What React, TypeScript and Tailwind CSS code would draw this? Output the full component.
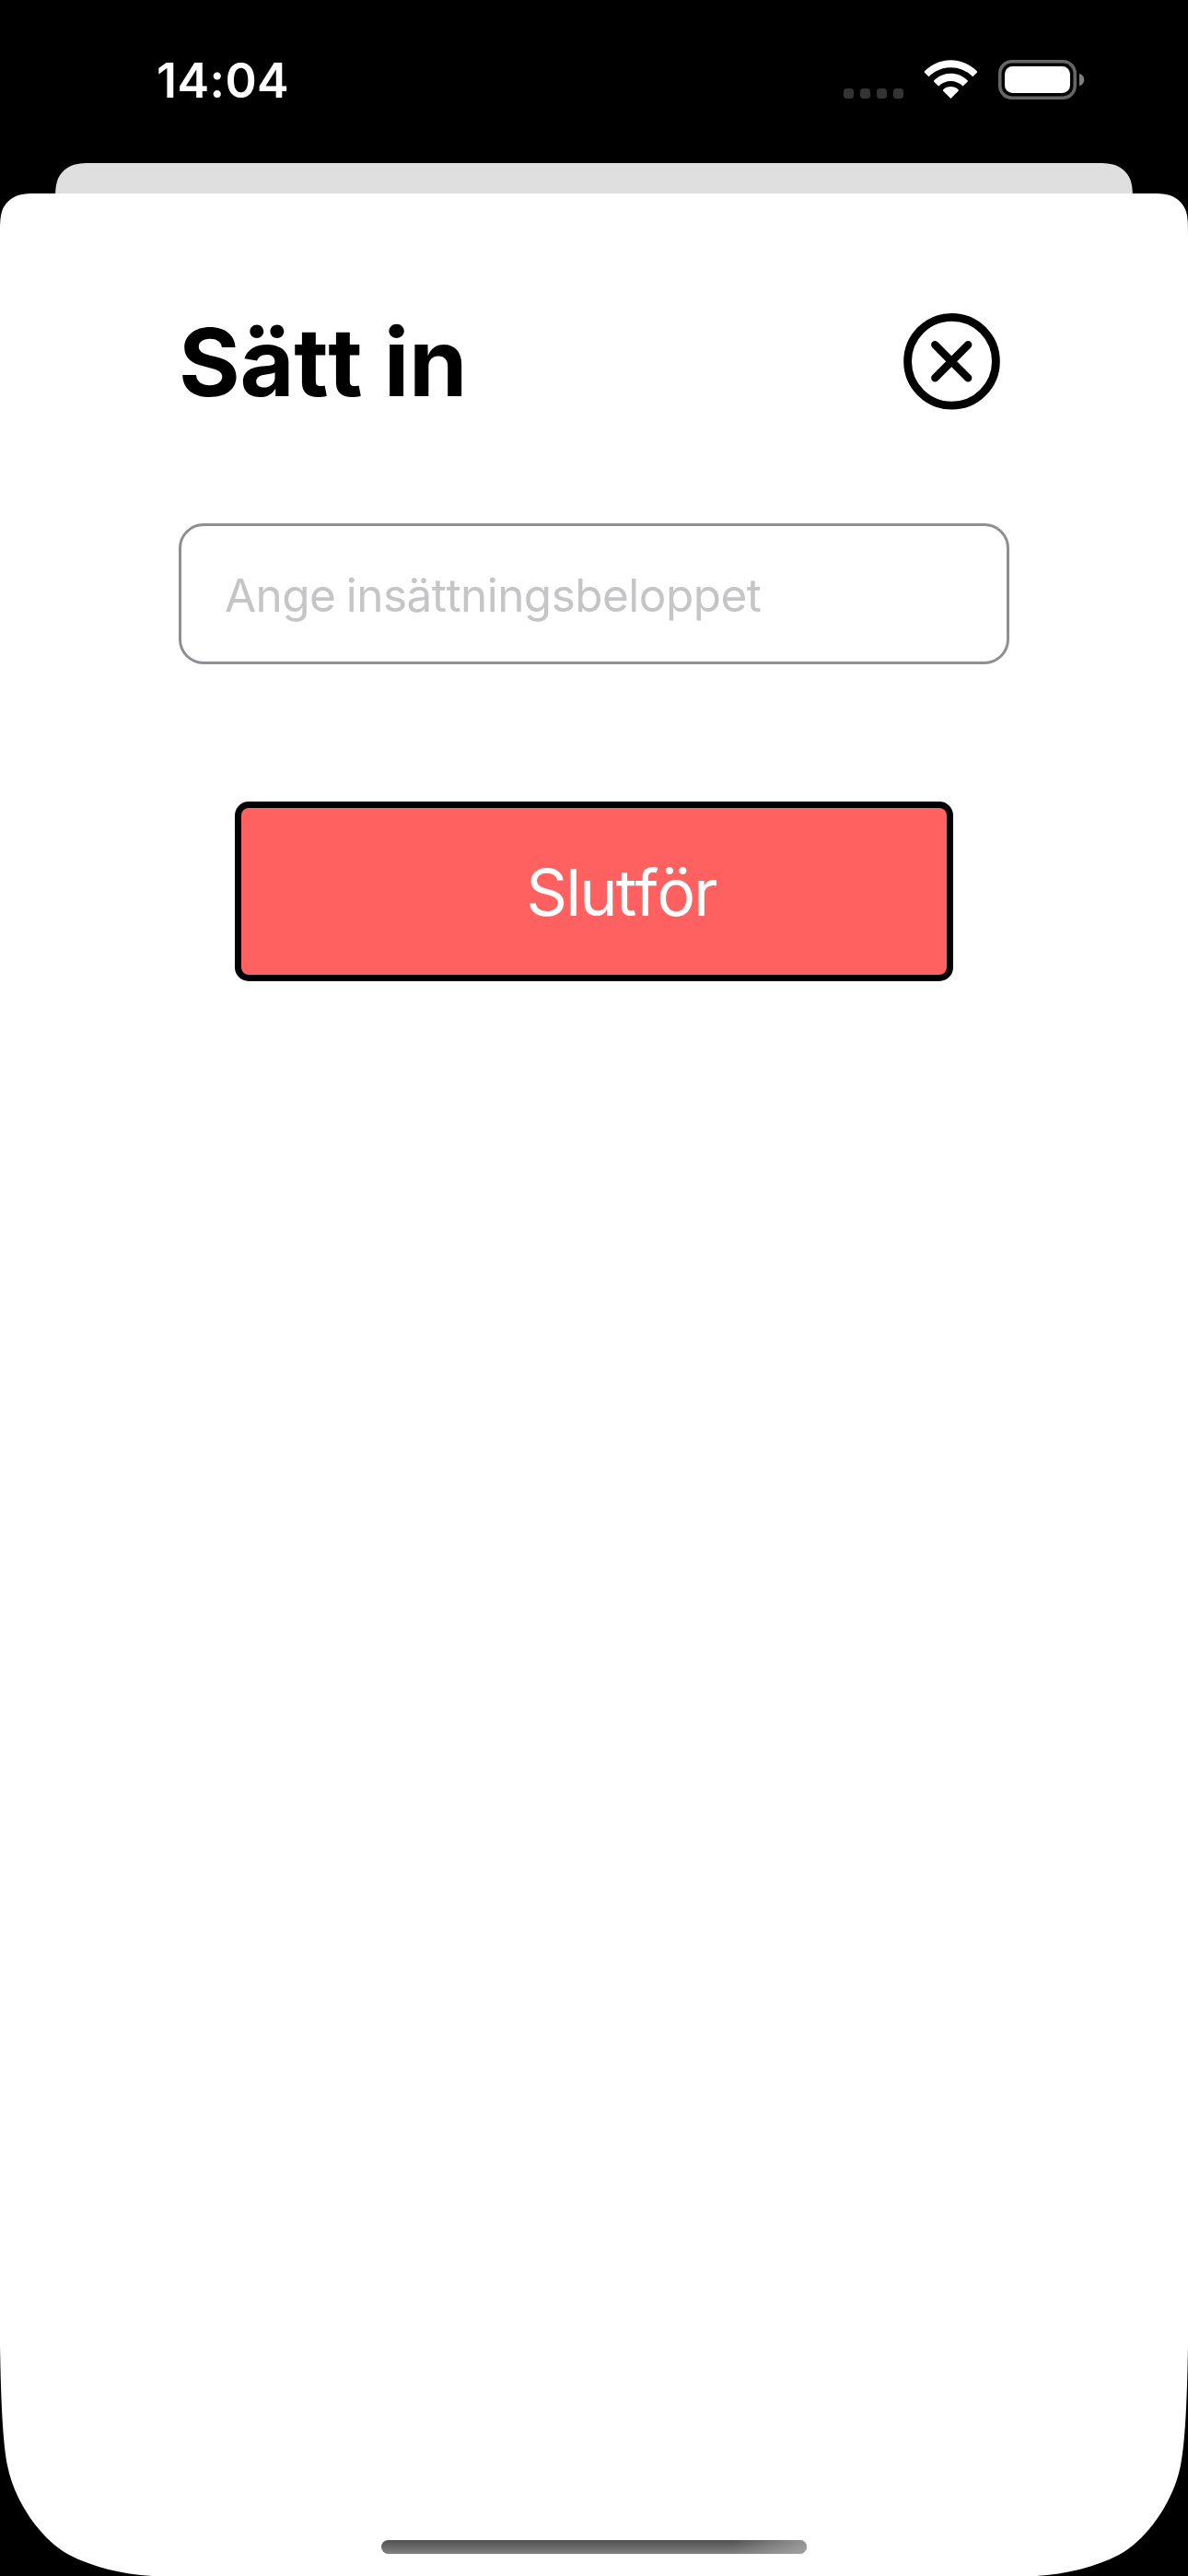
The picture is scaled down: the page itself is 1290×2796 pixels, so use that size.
import React from "react";

// Continuous (squircle-like) corner filled outside of the curve, anchored top-left.
function cornerPath(r: number) {
  const p = (n: number) => (n * r).toFixed(2);
  return [
    `M0 0H${p(1.528665)}`,
    `C${p(1.08849296)} 0 ${p(0.86840694)} 0 ${p(0.63149379)} ${p(0.07491139)}`,
    `C${p(0.37282383)} ${p(0.16905956)} ${p(0.16905956)} ${p(0.37282383)} ${p(0.07491139)} ${p(0.63149379)}`,
    `C0 ${p(0.86840694)} 0 ${p(1.08849296)} 0 ${p(1.528665)}Z`,
  ].join("");
}

function Corner({ r, className }: { r: number; className: string }) {
  const size = Math.ceil(r * 1.53);
  return (
    <svg width={size} height={size} viewBox={`0 0 ${size} ${size}`} className={`absolute text-black ${className}`} aria-hidden>
      <path d={cornerPath(r)} fill="currentColor" />
    </svg>
  );
}

// Large bottom corner of the device display, anchored bottom-left.
function DisplayCorner({ className }: { className: string }) {
  return (
    <svg width="170" height="250" viewBox="0 0 170 250" className={`absolute bottom-0 ${className}`} aria-hidden>
      <path
        d="M0 250H165C132 248 100 240 75 227C61 219.500 48 207 38 194C25 177 13 155 8 130C3 104 1 60 0 0Z"
        fill="black"
      />
    </svg>
  );
}

function StatusBar() {
  return (
    <header className="flex h-[177px] items-start justify-between pl-[170px] pr-[112px] text-white">
      <span className="mt-[56px] text-[52px] leading-[64px] font-semibold tracking-[0.4px]">14:04</span>
      <div className="mt-[65px] flex h-[43px] items-start">
        <div className="mt-[31px] flex gap-[7px]">
          {[0, 1, 2, 3].map((i) => (
            <span key={i} className="size-[11px] rounded-[3.5px] bg-[#333333]" />
          ))}
        </div>
        <svg width="58" height="43" viewBox="0 0 58 43" className="ml-[22px]" aria-hidden>
          <g fill="white">
            <path d="M1.2 12C17-3.8 41.8-3.8 57.6 12Q58.6 13 57.6 14L53.4 18.2C39.8 4.9 19 4.9 5.4 18.2L1.2 14Q.2 13 1.2 12Z" />
            <path d="M11.3 22.2C21.2 12.3 37.6 12.3 47.5 22.2Q48.3 23 47.5 23.8L42.6 28.6C35 21.2 23.8 21.2 16.2 28.6L11.3 23.8Q10.5 23 11.3 22.2Z" />
            <path d="M21.2 32.2C25.6 27.9 33.2 27.9 37.6 32.2Q38.4 33 37.6 33.8L29.4 42L21.2 33.8Q20.4 33 21.2 32.2Z" />
          </g>
        </svg>
        <svg width="94" height="43" viewBox="0 0 94 43" className="ml-[23px]" aria-hidden>
          <rect x="1.8" y="1.8" width="81.4" height="39.4" rx="13" fill="none" stroke="#666666" strokeWidth="3.6" />
          <rect x="7" y="7" width="71" height="29" rx="8.5" fill="white" />
          <path d="M88 14.7C95 17 95 26 88 28.3Z" fill="#808080" />
        </svg>
      </div>
    </header>
  );
}

function CloseIcon() {
  return (
    <svg width="105" height="105" viewBox="0 0 105 105" fill="none" stroke="black" aria-hidden>
      <circle cx="52.5" cy="52.3" r="47.9" strokeWidth="8.8" />
      <path d="M34.3 34.3L70.2 70.2M70.2 34.3L34.3 70.2" strokeWidth="8.4" strokeLinecap="round" />
    </svg>
  );
}

export default function App() {
  return (
    <div className="flex h-[2796px] w-[1290px] flex-col overflow-hidden bg-black font-['Inter',sans-serif]">
      <StatusBar />
      <div className="relative mx-[60px] h-[33px] shrink-0 bg-[#dfdfdf]">
        <Corner r={30} className="top-0 left-0" />
        <Corner r={30} className="top-0 right-0 -scale-x-100" />
      </div>
      <main className="relative flex flex-1 flex-col bg-white">
        <Corner r={30} className="top-0 left-0" />
        <Corner r={30} className="top-0 right-0 -scale-x-100" />
        <DisplayCorner className="left-0" />
        <DisplayCorner className="right-0 -scale-x-100" />

        <div className="flex items-start justify-between pt-[130px] pr-[204px] pl-[194px]">
          <h1 className="text-[102px] leading-[106px] font-bold tracking-[-0.4px] [font-kerning:none]">Sätt in</h1>
          <button aria-label="Stäng">
            <CloseIcon />
          </button>
        </div>

        <input
          placeholder="Ange insättningsbeloppet"
          className="mx-[194px] mt-[122px] h-[153px] rounded-[27px] border-[3px] border-[#8e8e93] px-[47px] pt-[2px] text-[49.5px] tracking-[-0.55px] [font-kerning:none] [word-spacing:-2px] placeholder:text-[#c5c5c7]"
        />

        <button className="mx-[255px] mt-[149px] flex h-[195px] items-center justify-center rounded-[15px] border-[7.5px] border-black bg-[#ff6060] pt-[2px] pl-[59px] text-[70px] tracking-[-2px] text-white [font-kerning:none]">
          Slutför
        </button>

        <div className="mt-auto mb-[24px] h-[15px] w-[462px] self-center rounded-full bg-linear-to-b from-[#505050] to-[#828282]">
          <div className="ml-auto h-full w-[80px] rounded-r-full bg-linear-to-r from-transparent to-[#b0b0b0]/70" />
        </div>
      </main>
    </div>
  );
}
